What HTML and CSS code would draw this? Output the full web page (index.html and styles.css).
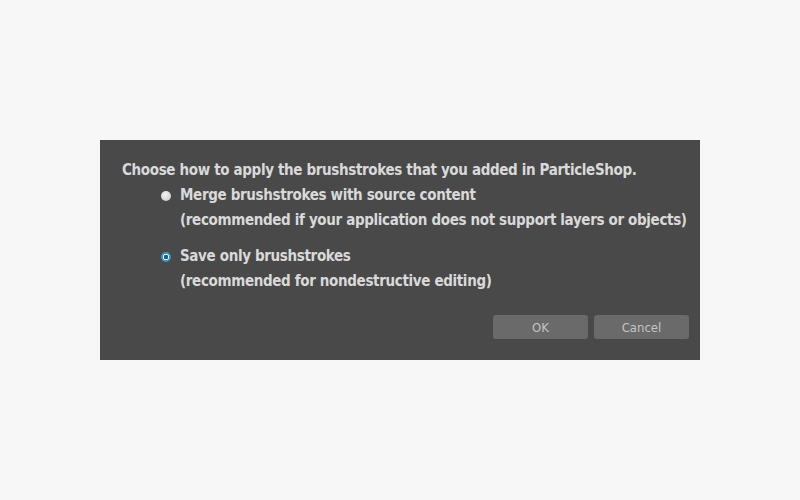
FILE: index.html
```html
<!DOCTYPE html>
<html>
	<head>
		<meta charset="UTF-8">
		<title>ParticleShop</title>
		<link rel="stylesheet" href="styles.css">
	</head>
	<body>
		<div class="dialog">
			<p class="prompt">Choose how to apply the brushstrokes that you added in ParticleShop.</p>
			<div class="option">
				<div class="option-row"><span class="radio"></span>Merge brushstrokes with source content</div>
				<div class="hint">(recommended if your application does not support layers or objects)</div>
			</div>
			<div class="option option-gap">
				<div class="option-row"><span class="radio checked"></span>Save only brushstrokes</div>
				<div class="hint">(recommended for nondestructive editing)</div>
			</div>
			<div class="buttons">
				<button class="btn">OK</button>
				<button class="btn">Cancel</button>
			</div>
		</div>
	</body>
</html>
```

FILE: styles.css
```css
body {
	margin: 0;
	background: #f7f7f7;
	font-family: "DejaVu Sans Condensed", "DejaVu Sans", sans-serif;
}
.dialog {
	width: 600px;
	height: 220px;
	margin: 140px 0 0 100px;
	background: #494949;
	color: #d9d9d9;
	display: flex;
	flex-direction: column;
	box-sizing: border-box;
	padding-top: 18px;
	font-size: 15px;
	font-weight: bold;
	line-height: 25px;
	letter-spacing: -0.35px;
	white-space: nowrap;
}
.prompt {
	margin: 0;
	padding-left: 22px;
}
.option {
	padding-left: 61px;
}
.option-gap {
	margin-top: 11px;
}
.option-row {
	display: flex;
	align-items: center;
}
.radio {
	width: 10px;
	height: 10px;
	border-radius: 50%;
	background: radial-gradient(circle at 40% 35%, #f2f2f2, #c8c8c8);
	margin-right: 9px;
	flex-shrink: 0;
}
.radio.checked {
	background: radial-gradient(circle, #1c5f86 0 2px, #e4f1f8 2.5px 3px, #3d97c9 3.5px);
}
.hint {
	padding-left: 19px;
}
.buttons {
	margin-top: auto;
	display: flex;
	justify-content: flex-end;
	gap: 6px;
	padding: 0 11px 21px 0;
}
.btn {
	width: 95px;
	height: 24px;
	border: none;
	border-radius: 3px;
	background: #6a6a6a;
	color: #c4c4c4;
	font-family: "DejaVu Sans Condensed", "DejaVu Sans", sans-serif;
	font-size: 13px;
	padding: 0;
}
```
